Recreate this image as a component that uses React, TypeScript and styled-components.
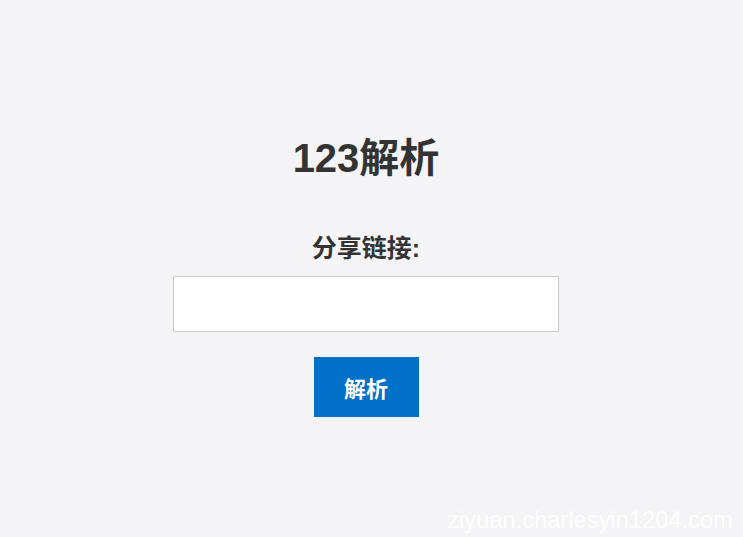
import React from "react";
import styled, { createGlobalStyle } from "styled-components";

const Global = createGlobalStyle`
  html, body {
    margin: 0;
    padding: 0;
    background: #f4f4f6;
    font-family: "Liberation Sans", "Noto Sans CJK SC", sans-serif;
    color: #333;
  }
  * { box-sizing: border-box; }
`;

const Page = styled.div`
  min-height: 537px;
  padding-right: 11px;
`;

const Main = styled.main`
  display: flex;
  flex-direction: column;
  align-items: center;
  padding-top: 130px;
`;

const Title = styled.h1`
  margin: 0;
  font-size: 40px;
  line-height: 56px;
  font-weight: 700;
  color: #333;
`;

const Form = styled.form`
  display: flex;
  flex-direction: column;
  align-items: center;
  margin-top: 46px;
`;

const Label = styled.label`
  font-size: 25px;
  line-height: 32px;
  font-weight: 700;
  color: #333;
`;

const Input = styled.input`
  margin-top: 12px;
  width: 386px;
  height: 56px;
  border: 1px solid #ccc;
  background: #fff;
  outline: none;
  padding: 0 10px;
  font-size: 16px;
`;

const Button = styled.button`
  margin-top: 25px;
  width: 105px;
  height: 60px;
  border: none;
  background: #0070c9;
  color: #fff;
  font-family: inherit;
  font-size: 22px;
  font-weight: 700;
  cursor: pointer;
`;

const Watermark = styled.div`
  position: fixed;
  right: 10px;
  bottom: 3px;
  color: rgba(255, 255, 255, 0.9);
  font-size: 23.7px;
  line-height: 28px;
  pointer-events: none;
`;

export default function App() {
  return (
    <Page>
      <Global />
      <Main>
        <Title>123解析</Title>
        <Form onSubmit={(e) => e.preventDefault()}>
          <Label htmlFor="link">分享链接:</Label>
          <Input id="link" type="text" />
          <Button type="submit">解析</Button>
        </Form>
      </Main>
      <Watermark>ziyuan.charlesyin1204.com</Watermark>
    </Page>
  );
}
